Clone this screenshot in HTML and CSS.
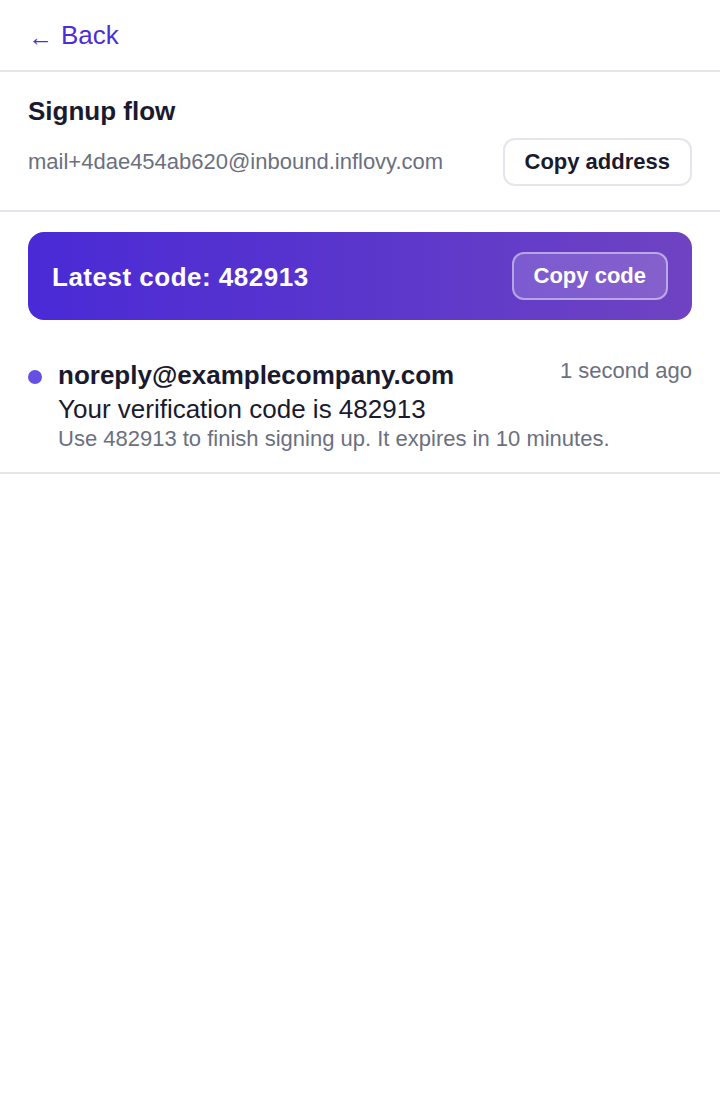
FILE: index.html
```html
<!DOCTYPE html>
<html lang="en">
<head>
<meta charset="utf-8">
<title>Signup flow</title>
<link rel="stylesheet" href="styles.css">
</head>
<body>
<header class="topbar">
  <a class="back" href="#"><span class="arrow">←</span> Back</a>
</header>
<section class="inbox">
  <h1 class="title">Signup flow</h1>
  <div class="address-row">
    <span class="address">mail+4dae454ab620@inbound.inflovy.com</span>
    <button class="btn-outline">Copy address</button>
  </div>
</section>
<div class="code-banner">
  <span class="code-text">Latest code: 482913</span>
  <button class="btn-ghost">Copy code</button>
</div>
<ul class="messages">
  <li class="message">
    <span class="dot"></span>
    <div class="msg-body">
      <div class="sender">noreply@examplecompany.com</div>
      <div class="subject">Your verification code is 482913</div>
      <div class="preview">Use 482913 to finish signing up. It expires in 10 minutes.</div>
    </div>
    <span class="time">1 second ago</span>
  </li>
</ul>
</body>
</html>
```
FILE: styles.css
```css
* { box-sizing: border-box; }
html, body { margin: 0; padding: 0; background: #ffffff; }
body {
  font-family: "Liberation Sans", Arial, sans-serif;
  color: #1a1a2e;
}
.topbar {
  height: 72px;
  padding: 20px 28px 0;
  border-bottom: 2px solid #e5e5ec;
}
.back {
  font-size: 26px;
  line-height: 30px;
  color: #4b2fd6;
  text-decoration: none;
  display: inline-flex;
  align-items: baseline;
  gap: 8px;
}
.arrow {
  font-size: 25px;
  position: relative;
  top: 2px;
}
.inbox {
  padding: 24px 28px;
  border-bottom: 2px solid #e5e5ec;
}
.title {
  margin: 0;
  font-size: 26px;
  line-height: 30px;
  font-weight: 700;
  color: #1a1a2e;
}
.address-row {
  margin-top: 12px;
  display: flex;
  align-items: center;
  justify-content: space-between;
}
.address {
  font-size: 22px;
  color: #6b7080;
}
.btn-outline {
  font-family: inherit;
  font-size: 22px;
  font-weight: 700;
  color: #1a1a2e;
  background: #ffffff;
  border: 2px solid #e5e5ec;
  border-radius: 12px;
  height: 48px;
  padding: 0 20px;
  cursor: pointer;
}
.code-banner {
  margin: 20px 28px;
  height: 88px;
  border-radius: 16px;
  padding: 0 24px;
  display: flex;
  align-items: center;
  justify-content: space-between;
  background: linear-gradient(90deg, #4a2ad6 0%, #5a36cc 50%, #6f43c2 100%);
}
.code-text {
  font-size: 26px;
  font-weight: 700;
  letter-spacing: 0.5px;
  color: #ffffff;
  padding-top: 2px;
}
.btn-ghost {
  font-family: inherit;
  font-size: 22px;
  font-weight: 700;
  color: #ffffff;
  background: rgba(255, 255, 255, 0.16);
  border: 2px solid rgba(255, 255, 255, 0.45);
  border-radius: 12px;
  height: 48px;
  padding: 0 20px;
  cursor: pointer;
}
.messages {
  list-style: none;
  margin: 0;
  padding: 0;
}
.message {
  display: flex;
  align-items: flex-start;
  padding: 18px 28px 19px;
  border-bottom: 2px solid #e5e5ec;
}
.dot {
  flex: none;
  width: 14px;
  height: 14px;
  border-radius: 50%;
  background: #6650e3;
  margin-top: 12px;
  margin-right: 16px;
}
.msg-body {
  flex: 1;
  min-width: 0;
  padding-top: 2px;
}
.sender {
  font-size: 26px;
  line-height: 1.2;
  font-weight: 700;
  color: #1a1a2e;
}
.subject {
  margin-top: 3px;
  font-size: 26px;
  line-height: 1.2;
  color: #1a1a2e;
}
.preview {
  margin-top: 1px;
  font-size: 22px;
  line-height: 1.2;
  color: #6b7080;
  white-space: nowrap;
}
.time {
  flex: none;
  font-size: 22px;
  line-height: 1.2;
  color: #6b7080;
  margin-left: -120px;
}
```
